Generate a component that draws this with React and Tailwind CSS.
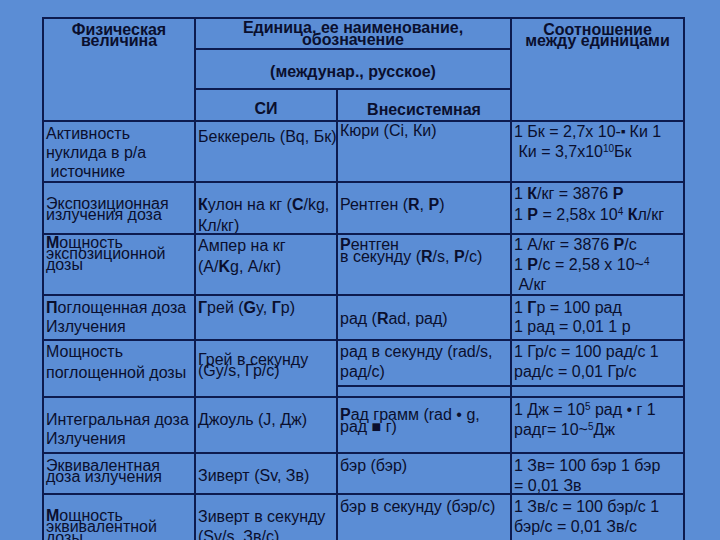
const font = { fontFamily: '"Liberation Sans", Arial, sans-serif' };

// lh = line-height class, passed separately so it never clashes with a default
function Cell({ lh = 'leading-[20px]', className = '', children }) {
    return (
        <div className={`bg-[#5b8dd5] text-[#0a0f2e] text-[16px] pl-[2px] whitespace-nowrap overflow-hidden ${lh} ${className}`}>
            {children}
        </div>
    );
}

function Head({ className = '', children }) {
    return (
        <div className={`bg-[#5b8dd5] text-[#0a0f2e] text-[16px] font-bold text-center whitespace-nowrap overflow-hidden ${className}`}>
            {children}
        </div>
    );
}

const Sup = ({ children }) => <sup className="text-[10px]">{children}</sup>;

export default function App() {
    return (
        <div className="w-[720px] h-[540px] bg-[#5b8dd5] overflow-hidden" style={font}>
            <div className="ml-[42px] mt-[17px] w-[643px] bg-[#0d1b4f] p-[2px] grid gap-[2px] grid-cols-[150px_140px_172px_171px] grid-rows-[29px_38px_30px_59px_50px_59px_43px_44px_9px_54px_39px_70px]">
                {/* header */}
                <Head className="col-start-1 row-start-1 row-span-3 leading-[11px] pt-[5px]">
                    Физическая<br />величина
                </Head>
                <Head className="col-start-2 col-span-2 row-start-1 leading-[12px] pt-[3px]">
                    Единица, ее наименование,<br />обозначение
                </Head>
                <Head className="col-start-2 col-span-2 row-start-2 leading-[16px] pt-[14px]">
                    (междунар., русское)
                </Head>
                <Head className="col-start-2 row-start-3 leading-[16px] pt-[11px]">СИ</Head>
                <Head className="col-start-3 row-start-3 leading-[16px] pt-[12px]">Внесистемная</Head>
                <Head className="col-start-4 row-start-1 row-span-3 leading-[11px] pt-[5px]">
                    Соотношение<br />между единицами
                </Head>

                {/* Активность */}
                <Cell lh="leading-[19px]" className="col-start-1 row-start-4 pt-[2px]">
                    Активность<br />нуклида в р/а<br />&nbsp;источнике
                </Cell>
                <Cell className="col-start-2 row-start-4 pt-[5px]">Беккерель (Bq, Бк)</Cell>
                <Cell lh="leading-[18px]" className="col-start-3 row-start-4 pt-0">Кюри (Ci, Ки)</Cell>
                <Cell className="col-start-4 row-start-4 pt-0">
                    1 Бк = 2,7x 10-<sup className="text-[7px]">■</sup> Ки 1<br />&nbsp;Ки = 3,7x10<Sup>10</Sup>Бк
                </Cell>

                {/* Экспозиционная доза */}
                <Cell lh="leading-[11px]" className="col-start-1 row-start-5 pt-[15px]">
                    Экспозиционная<br />излучения доза
                </Cell>
                <Cell lh="leading-[21px]" className="col-start-2 row-start-5 pt-[11px]">
                    <b>К</b>улон на кг (<b>C</b>/kg,<br />Кл/кг)
                </Cell>
                <Cell className="col-start-3 row-start-5 pt-[12px]">
                    Рентген (<b>R</b>, <b>P</b>)
                </Cell>
                <Cell lh="leading-[21px]" className="col-start-4 row-start-5 pt-0">
                    1 <b>К</b>/кг = 3876 <b>Р</b><br />1 <b>Р</b> = 2,58x 10<Sup>4</Sup> <b>К</b>л/кг
                </Cell>

                {/* Мощность экспозиционной дозы */}
                <Cell lh="leading-[11px]" className="col-start-1 row-start-6 pt-[2px]">
                    <b>М</b>ощность<br />экспозиционной<br />дозы
                </Cell>
                <Cell lh="leading-[21px]" className="col-start-2 row-start-6 pt-0">
                    Ампер на кг<br />(A/<b>K</b>g, А/кг)
                </Cell>
                <Cell lh="leading-[12px]" className="col-start-3 row-start-6 pt-[4px]">
                    <b>Р</b>ентген<br />в секунду (<b>R</b>/s, <b>Р</b>/с)
                </Cell>
                <Cell className="col-start-4 row-start-6 pt-0">
                    1 А/кг = 3876 <b>Р</b>/с<br />1 <b>Р</b>/с = 2,58 x 10~<Sup>4</Sup><br />&nbsp;А/кг
                </Cell>

                {/* Поглощенная доза */}
                <Cell lh="leading-[19px]" className="col-start-1 row-start-7 pt-[2px]">
                    <b>П</b>оглощенная доза<br />Излучения
                </Cell>
                <Cell className="col-start-2 row-start-7 pt-[2px]">
                    <b>Г</b>рей (<b>G</b>y, <b>Г</b>р)
                </Cell>
                <Cell className="col-start-3 row-start-7 pt-[13px]">
                    рад (<b>R</b>ad, рад)
                </Cell>
                <Cell lh="leading-[19px]" className="col-start-4 row-start-7 pt-[2px]">
                    1 <b>Г</b>р = 100 рад<br />1 рад = 0,01 1 р
                </Cell>

                {/* Мощность поглощенной дозы */}
                <Cell lh="leading-[21px]" className="col-start-1 row-start-8 row-span-2 pt-0">
                    Мощность<br />поглощенной дозы
                </Cell>
                <Cell lh="leading-[11px]" className="col-start-2 row-start-8 row-span-2 pt-[13px]">
                    Грей в секунду<br />(Gy/s, Гр/с)
                </Cell>
                <Cell className="col-start-3 row-start-8 pt-[1px]">
                    рад в секунду (rad/s,<br />рад/с)
                </Cell>
                <Cell className="col-start-4 row-start-8 pt-[1px]">
                    1 Гр/с = 100 рад/с 1<br />рад/с = 0,01 Гр/с
                </Cell>
                <Cell className="col-start-3 row-start-9" />
                <Cell className="col-start-4 row-start-9" />

                {/* Интегральная доза */}
                <Cell lh="leading-[19px]" className="col-start-1 row-start-10 pt-[12px]">
                    Интегральная доза<br />Излучения
                </Cell>
                <Cell className="col-start-2 row-start-10 pt-[12px]">Джоуль (J, Дж)</Cell>
                <Cell lh="leading-[12px]" className="col-start-3 row-start-10 pt-[11px]">
                    <b>Р</b>ад грамм (rad • g,<br />рад ■ г)
                </Cell>
                <Cell className="col-start-4 row-start-10 pt-[2px]">
                    1 Дж = 10<Sup>5</Sup> рад • г 1<br />радг= 10~<Sup>5</Sup>Дж
                </Cell>

                {/* Эквивалентная доза */}
                <Cell lh="leading-[11px]" className="col-start-1 row-start-11 pt-[6px]">
                    Эквивалентная<br />доза излучения
                </Cell>
                <Cell className="col-start-2 row-start-11 pt-[12px]">Зиверт (Sv, Зв)</Cell>
                <Cell className="col-start-3 row-start-11 pt-[2px]">бэр (бэр)</Cell>
                <Cell className="col-start-4 row-start-11 pt-[2px]">
                    1 Зв= 100 бэр 1 бэр<br />= 0,01 Зв
                </Cell>

                {/* Мощность эквивалентной дозы */}
                <Cell lh="leading-[11px]" className="col-start-1 row-start-12 pt-[15px]">
                    <b>М</b>ощность<br />эквивалентной<br />дозы
                </Cell>
                <Cell className="col-start-2 row-start-12 pt-[12px]">
                    Зиверт в секунду<br />(Sv/s, Зв/с)
                </Cell>
                <Cell className="col-start-3 row-start-12 pt-[2px]">бэр в секунду (бэр/с)</Cell>
                <Cell className="col-start-4 row-start-12 pt-[2px]">
                    1 Зв/с = 100 бэр/с 1<br />бэр/с = 0,01 Зв/с
                </Cell>
            </div>
        </div>
    );
}
